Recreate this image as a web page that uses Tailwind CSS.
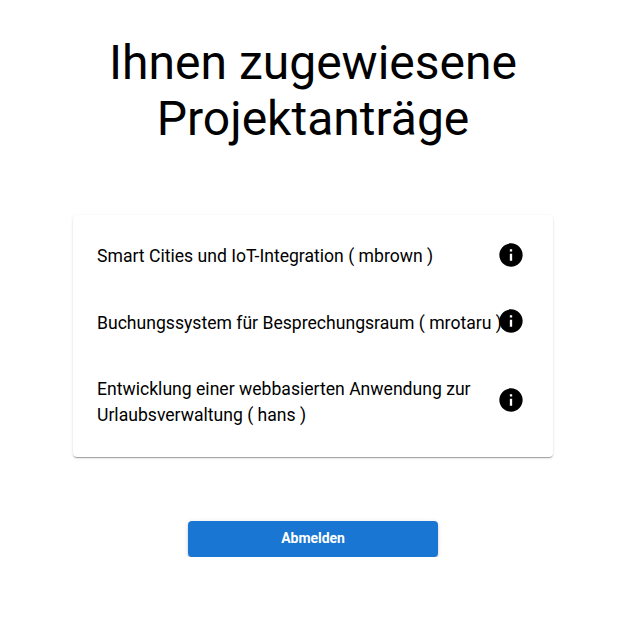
<!DOCTYPE html>
<html lang="de">
<head>
<meta charset="utf-8">
<title>Projektanträge</title>
<script src="https://cdn.jsdelivr.net/npm/@tailwindcss/browser@4"></script>
</head>
<body class="bg-white font-['Roboto',sans-serif] text-black">
<main class="flex w-[626px] flex-col items-center pt-[35px]">
  <h1 class="w-[480px] text-center text-[48px] leading-[56px]">Ihnen zugewiesene Projektanträge</h1>
  <ul class="mt-[68px] flex h-[242px] w-[480px] flex-col rounded-[4px] bg-white pt-2 shadow-[0_2px_1px_-1px_rgba(0,0,0,0.2),0_1px_1px_0_rgba(0,0,0,0.14),0_1px_3px_0_rgba(0,0,0,0.12)]">
    <li class="flex h-[66.4px] shrink-0 items-center pr-[30px] pl-6 text-[17.6px] leading-[26.4px]">
      <span class="w-[402px] shrink-0 whitespace-nowrap">Smart Cities und IoT-Integration ( mbrown )</span>
      <svg class="mb-[2.4px] -ml-0.5 size-7 shrink-0" viewBox="0 0 24 24" fill="currentColor"><path d="M12 2C6.48 2 2 6.48 2 12s4.480 10 10 10 10-4.480 10-10S17.520 2 12 2zm1 15h-2v-6h2v6zm0-8h-2V7h2v2z"/></svg>
    </li>
    <li class="flex h-[66.4px] shrink-0 items-center pr-[30px] pl-6 text-[17.6px] leading-[26.4px]">
      <span class="w-[402px] shrink-0 pt-[0.4px] whitespace-nowrap">Buchungssystem für Besprechungsraum ( mrotaru )</span>
      <svg class="mb-[3.2px] -ml-0.5 size-7 shrink-0" viewBox="0 0 24 24" fill="currentColor"><path d="M12 2C6.48 2 2 6.48 2 12s4.480 10 10 10 10-4.480 10-10S17.520 2 12 2zm1 15h-2v-6h2v6zm0-8h-2V7h2v2z"/></svg>
    </li>
    <li class="flex h-[92.8px] shrink-0 items-center pr-[30px] pl-6 text-[17.6px] leading-[26.4px]">
      <span class="w-[402px] shrink-0">Entwicklung einer webbasierten Anwendung zur Urlaubsverwaltung ( hans )</span>
      <svg class="mb-[4.4px] -ml-0.5 size-7 shrink-0" viewBox="0 0 24 24" fill="currentColor"><path d="M12 2C6.48 2 2 6.48 2 12s4.480 10 10 10 10-4.480 10-10S17.520 2 12 2zm1 15h-2v-6h2v6zm0-8h-2V7h2v2z"/></svg>
    </li>
  </ul>
  <button class="mt-16 h-9 w-[250px] rounded-[4px] bg-[#1976d2] pb-0.5 text-[14px] tracking-[-0.05px] font-bold text-white shadow-[0_3px_1px_-2px_rgba(0,0,0,0.2),0_2px_2px_0_rgba(0,0,0,0.14),0_1px_5px_0_rgba(0,0,0,0.12)]">Abmelden</button>
</main>
</body>
</html>
